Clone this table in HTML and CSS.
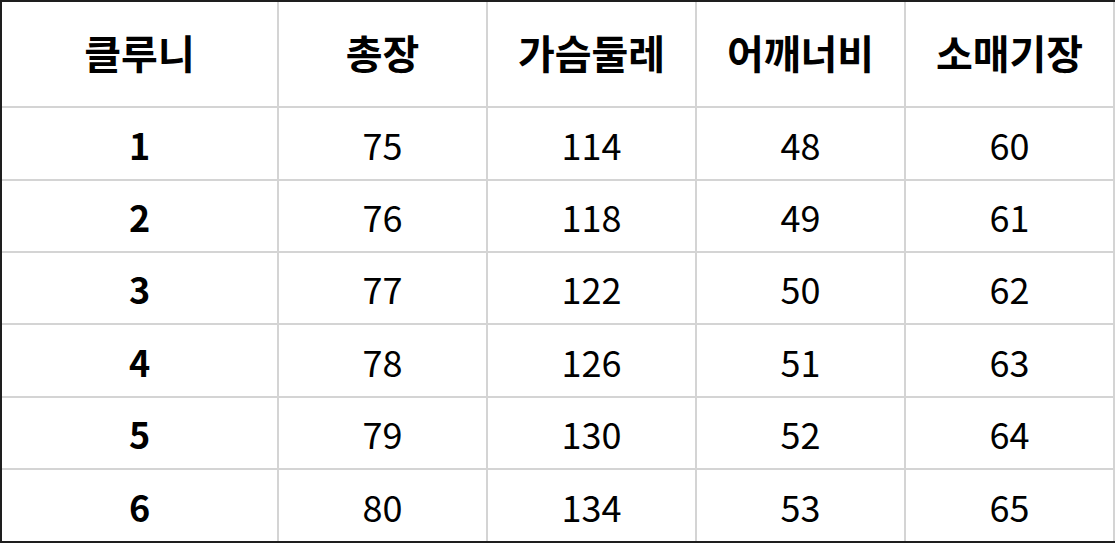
FILE: index.html
```html
<!DOCTYPE html>
<html lang="ko">
<head>
<meta charset="utf-8">
<link rel="stylesheet" href="styles.css">
</head>
<body>
<table class="size-table">
  <colgroup>
    <col class="c-first">
    <col class="c-data">
    <col class="c-data">
    <col class="c-data">
    <col class="c-data">
  </colgroup>
  <thead>
    <tr class="head-row">
      <th>클루니</th><th>총장</th><th>가슴둘레</th><th>어깨너비</th><th>소매기장</th>
    </tr>
  </thead>
  <tbody>
    <tr class="r1"><th>1</th><td>75</td><td>114</td><td>48</td><td>60</td></tr>
    <tr class="r2"><th>2</th><td>76</td><td>118</td><td>49</td><td>61</td></tr>
    <tr class="r3"><th>3</th><td>77</td><td>122</td><td>50</td><td>62</td></tr>
    <tr class="r4"><th>4</th><td>78</td><td>126</td><td>51</td><td>63</td></tr>
    <tr class="r5"><th>5</th><td>79</td><td>130</td><td>52</td><td>64</td></tr>
    <tr class="r6"><th>6</th><td>80</td><td>134</td><td>53</td><td>65</td></tr>
  </tbody>
</table>
</body>
</html>
```
FILE: styles.css
```css
html, body {
  margin: 0;
  padding: 0;
  background: #ffffff;
}

.size-table {
  border-collapse: separate;
  border-spacing: 0;
  table-layout: fixed;
  width: 1115px;
  border-top: 2px solid #1e1e1e;
  border-left: 2px solid #1e1e1e;
  border-bottom: 2px solid #1e1e1e;
  font-family: "Noto Sans CJK KR", "Noto Sans", sans-serif;
  font-size: 36px;
  color: #000;
}

.c-first { width: 277px; }
.c-data { width: 209px; }

.size-table th,
.size-table td {
  padding: 0;
  text-align: center;
  vertical-align: middle;
  border-right: 2px solid #d4d4d4;
  border-bottom: 2px solid #d4d4d4;
  line-height: 1;
}

.size-table th { font-weight: 700; }
.size-table td { font-weight: 400; }

.head-row th {
  font-size: 40px;
  padding-bottom: 4px;
}

.size-table tbody tr:last-child th,
.size-table tbody tr:last-child td {
  border-bottom: none;
}

.head-row { height: 106px; }
.size-table tbody tr { height: 72px; }
.size-table tbody tr.r1 { height: 73px; }
.size-table tbody tr.r4 { height: 73px; }
.size-table tbody tr.r6 { height: 71px; }
```
